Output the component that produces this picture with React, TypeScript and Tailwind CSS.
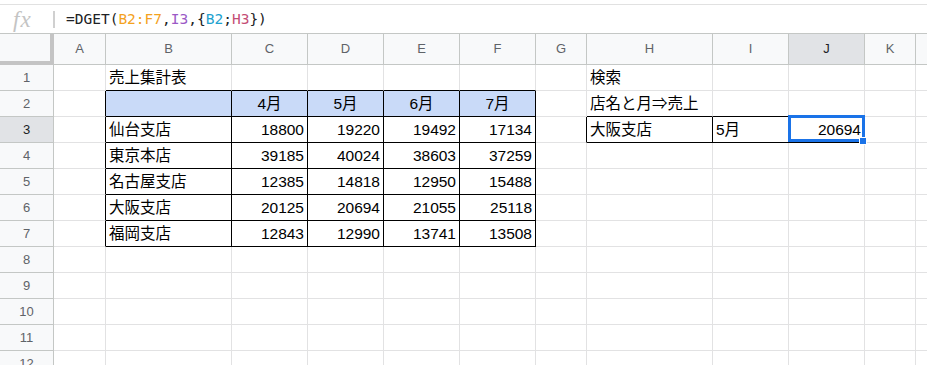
import React from "react";

type Col = { l: string; w: string };

const cols: Col[] = [
  { l: "A", w: "w-[52px]" },
  { l: "B", w: "w-[126px]" },
  { l: "C", w: "w-[76px]" },
  { l: "D", w: "w-[76px]" },
  { l: "E", w: "w-[76px]" },
  { l: "F", w: "w-[76px]" },
  { l: "G", w: "w-[51px]" },
  { l: "H", w: "w-[126px]" },
  { l: "I", w: "w-[76px]" },
  { l: "J", w: "w-[76px]" },
  { l: "K", w: "w-[51px]" },
  { l: "", w: "w-[100px]" },
];

type Cell = { t: string; a?: "l" | "c" | "r" };

const data: Record<number, Record<number, Cell>> = {
  1: { 1: { t: "売上集計表" }, 7: { t: "検索" } },
  2: {
    2: { t: "4月", a: "c" },
    3: { t: "5月", a: "c" },
    4: { t: "6月", a: "c" },
    5: { t: "7月", a: "c" },
    7: { t: "店名と月⇒売上" },
  },
  3: {
    1: { t: "仙台支店" },
    2: { t: "18800", a: "r" },
    3: { t: "19220", a: "r" },
    4: { t: "19492", a: "r" },
    5: { t: "17134", a: "r" },
    7: { t: "大阪支店" },
    8: { t: "5月" },
    9: { t: "20694", a: "r" },
  },
  4: {
    1: { t: "東京本店" },
    2: { t: "39185", a: "r" },
    3: { t: "40024", a: "r" },
    4: { t: "38603", a: "r" },
    5: { t: "37259", a: "r" },
  },
  5: {
    1: { t: "名古屋支店" },
    2: { t: "12385", a: "r" },
    3: { t: "14818", a: "r" },
    4: { t: "12950", a: "r" },
    5: { t: "15488", a: "r" },
  },
  6: {
    1: { t: "大阪支店" },
    2: { t: "20125", a: "r" },
    3: { t: "20694", a: "r" },
    4: { t: "21055", a: "r" },
    5: { t: "25118", a: "r" },
  },
  7: {
    1: { t: "福岡支店" },
    2: { t: "12843", a: "r" },
    3: { t: "12990", a: "r" },
    4: { t: "13741", a: "r" },
    5: { t: "13508", a: "r" },
  },
};

const rightBlack = (r: number, c: number) =>
  (r >= 2 && r <= 7 && c >= 0 && c <= 5) || (r === 3 && c >= 6 && c <= 9);
const bottomBlack = (r: number, c: number) =>
  (c >= 1 && c <= 5 && r >= 1 && r <= 7) || (c >= 7 && c <= 9 && r >= 2 && r <= 3);

const FONT = "font-['Liberation_Sans','Noto_Sans_CJK_JP',Arial,sans-serif]";

function GridRow({ r }: { r: number }) {
  const rowData = data[r] || {};
  return (
    <div className="flex h-[26px]">
      <div
        className={`w-[54px] shrink-0 flex items-center justify-center border-r border-b border-r-[#c4c7c5] border-b-[#c4c7c5] text-[13px] ${
          r === 3 ? "bg-[#e1e3e6] text-[#202124]" : "bg-[#f8f9fa] text-[#5f6368]"
        }`}
      >
        {r}
      </div>
      {cols.map((col, c) => {
        const cell = rowData[c];
        const rb = rightBlack(r, c) ? "border-r-black" : "border-r-[#e2e2e3]";
        const bb = bottomBlack(r, c) ? "border-b-black" : "border-b-[#e2e2e3]";
        const bg = r === 2 && c >= 1 && c <= 5 ? "bg-[#c9daf8]" : "bg-white";
        const align =
          cell?.a === "r" ? "justify-end" : cell?.a === "c" ? "justify-center" : "justify-start";
        return (
          <div
            key={c}
            className={`${col.w} shrink-0 flex items-center ${align} px-[3px] pt-[1px] border-r border-b ${rb} ${bb} ${bg} text-[15.5px] text-black whitespace-nowrap`}
          >
            {cell?.t}
          </div>
        );
      })}
    </div>
  );
}

export default function App() {
  const rows = Array.from({ length: 12 }, (_, i) => i + 1);
  return (
    <div className={`relative w-[927px] h-[365px] overflow-hidden bg-white ${FONT}`}>
      {/* formula bar */}
      <div className="h-[33px] pt-[4px] flex flex-col">
        <div className="flex-1 border-t border-[#e1e1e1] flex items-center">
          <div className="w-[53px] shrink-0 flex items-center">
            <span className="ml-[13px] text-[23px] leading-none italic text-[#c4c4c4] font-['Liberation_Serif',serif] tracking-[1px]">
              fx
            </span>
          </div>
          <div className="w-[2px] h-[17px] bg-[#d0d0d0]" />
          <div className="ml-[11px] font-['DejaVu_Sans_Mono',monospace] text-[14.5px] text-[#202124] whitespace-nowrap pt-[1px]">
            =DGET(<span className="text-[#f4a21e]">B2:F7</span>,
            <span className="text-[#9b59c6]">I3</span>,{"{"}
            <span className="text-[#1fa2cf]">B2</span>;
            <span className="text-[#c44d75]">H3</span>
            {"})"}
          </div>
        </div>
      </div>
      {/* column header */}
      <div className="flex h-[32px] border-t border-[#c4c7c5]">
        <div className="w-[54px] shrink-0 bg-[#f8f9fa] border-r-4 border-b-4 border-[#c4c4c4]" />
        {cols.map((col, c) => (
          <div
            key={c}
            className={`${col.w} shrink-0 flex items-center justify-center border-r border-b border-[#c4c7c5] text-[13px] ${
              c === 9 ? "bg-[#e1e3e6] text-[#202124]" : "bg-[#f8f9fa] text-[#5f6368]"
            }`}
          >
            {col.l}
          </div>
        ))}
      </div>
      {rows.map((r) => (
        <GridRow key={r} r={r} />
      ))}
      {/* selection overlay on J3 */}
      <div className="absolute z-10 left-[788px] top-[115px] w-[77px] h-[27px] border-[3px] border-solid border-[#1a73e8] pointer-events-none" />
      <div className="absolute z-10 left-[859px] top-[137px] w-[8px] h-[8px] bg-[#1a73e8] border border-white pointer-events-none" />
    </div>
  );
}
